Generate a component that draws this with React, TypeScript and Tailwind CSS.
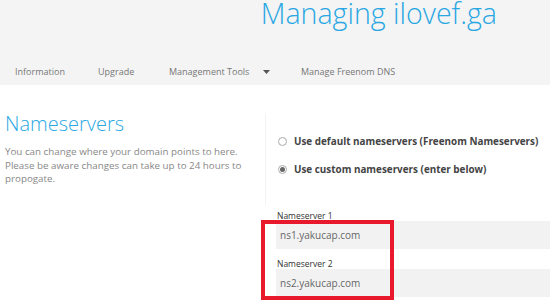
import { useState } from "react";

const NAV = ["Information", "Upgrade", "Management Tools", "Manage Freenom DNS"];

const Radio = ({ checked, label }: { checked: boolean; label: string }) => (
  <label className="flex h-[14px] items-center gap-[7px] whitespace-nowrap text-[9.9px] font-bold text-[#444]">
    <span className="flex h-[9px] w-[9px] shrink-0 items-center justify-center rounded-full border border-[#aaa] bg-white">
      {checked && <span className="h-[5px] w-[5px] rounded-full bg-[#666]" />}
    </span>
    {label}
  </label>
);

const NsField = ({ label, value }: { label: string; value: string }) => (
  <div className="flex flex-col">
    <span className="pl-[1px] text-[8.5px] leading-[11px] text-[#333]">{label}</span>
    <div className="flex h-[28px] items-center bg-[#f2f2f2] pl-[4px] text-[10px] text-[#666]">
      {value}
    </div>
  </div>
);

export default function App() {
  const [mode] = useState("custom");

  return (
    <div className="relative h-[305px] w-[550px] overflow-hidden bg-white font-['Open_Sans',sans-serif]">
      <header className="flex h-[85px] flex-col bg-[#f4f4f4]">
        <h1 className="self-end pr-[53px] text-[28.6px] font-light leading-[26px] text-[#2aa7e3]">
          Managing ilovef.ga
        </h1>
        <nav className="mt-auto flex items-center pb-[6px] pl-[15px] text-[9px] leading-[14px] text-[#777]">
          <span className="w-[83px]">{NAV[0]}</span>
          <span className="w-[71px]">{NAV[1]}</span>
          <span className="flex w-[132px] items-center gap-[14px]">
            {NAV[2]}
            <svg width="7" height="4" viewBox="0 0 7 4">
              <path d="M0 0h7L3.5 4z" fill="#555" />
            </svg>
          </span>
          <span>{NAV[3]}</span>
        </nav>
      </header>

      <main className="flex pt-[28px]">
        <section className="w-[265px] shrink-0 pl-[5px]">
          <h2 className="mt-[-3px] text-[20px] font-light leading-[28px] text-[#2aa7e3]">Nameservers</h2>
          <p className="mt-[7px] text-[9.8px] leading-[13.5px] text-[#888]">
            You can change where your domain points to here.
            <br />
            Please be aware changes can take up to 24 hours to
            <br />
            propogate.
          </p>
        </section>

        <section className="flex-1">
          <div className="flex h-[92px] flex-col gap-[14px] border-l border-[#f3f3f3] pl-[12px] pt-[21px]">
            <Radio checked={mode === "default"} label="Use default nameservers (Freenom Nameservers)" />
            <Radio checked={mode === "custom"} label="Use custom nameservers (enter below)" />
          </div>
          <div className="mt-[5px] flex flex-col gap-[9px] pl-[11px]">
            <NsField label="Nameserver 1" value="ns1.yakucap.com" />
            <NsField label="Nameserver 2" value="ns2.yakucap.com" />
          </div>
        </section>
      </main>

      <div className="pointer-events-none absolute left-[261px] top-[220px] h-[80px] w-[133px] border-[4px] border-[#e8192c]" />
    </div>
  );
}
